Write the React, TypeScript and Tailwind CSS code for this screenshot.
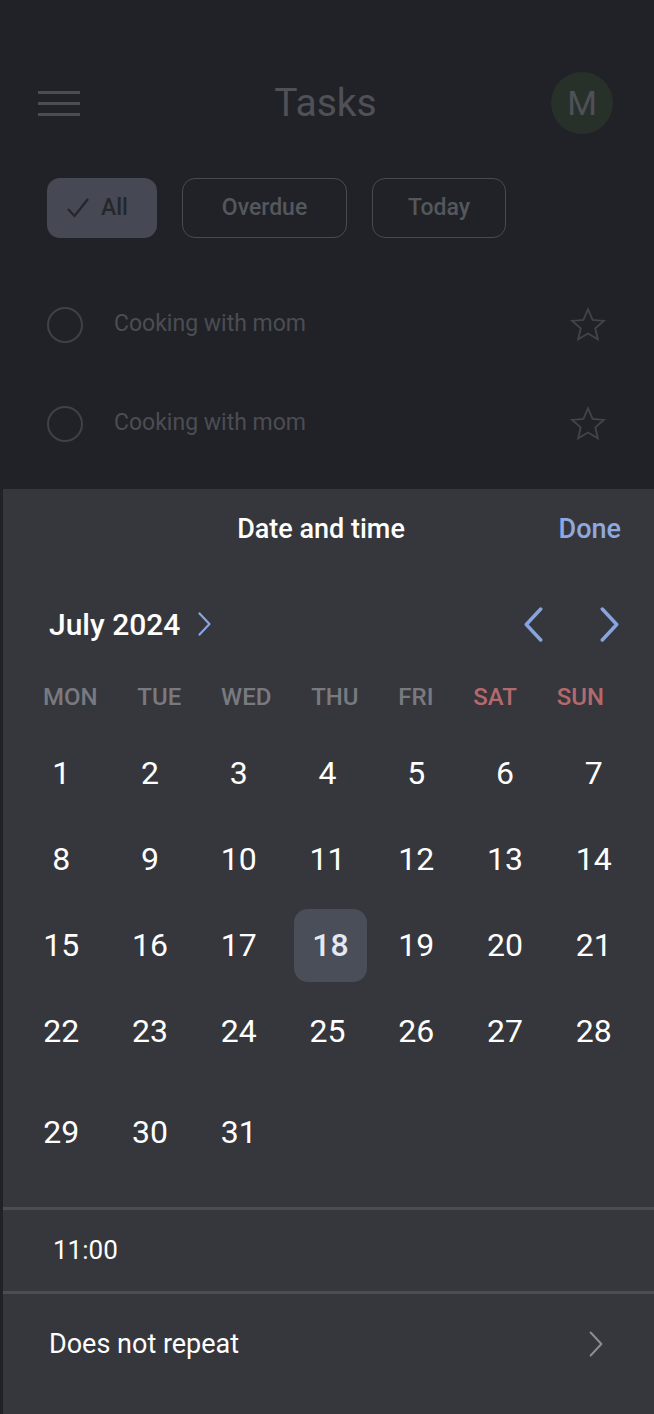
import React from "react";

const days: (number | null)[][] = [
  [1, 2, 3, 4, 5, 6, 7],
  [8, 9, 10, 11, 12, 13, 14],
  [15, 16, 17, 18, 19, 20, 21],
  [22, 23, 24, 25, 26, 27, 28],
  [29, 30, 31, null, null, null, null],
];

const weekdays = ["MON", "TUE", "WED", "THU", "FRI", "SAT", "SUN"];

function Chevron({ dir, className, sw }: { dir: "l" | "r"; className: string; sw: number }) {
  return (
    <svg viewBox="0 0 20 34" className={className} fill="none" stroke="currentColor" strokeWidth={sw} strokeLinecap="round" strokeLinejoin="round">
      {dir === "r" ? <path d="M3 2 L17 17 L3 32" /> : <path d="M17 2 L3 17 L17 32" />}
    </svg>
  );
}

function Star() {
  return (
    <svg viewBox="0 0 24 24" className="w-[38px] h-[38px] text-[#424349]" fill="none" stroke="currentColor" strokeWidth={1.2} strokeLinejoin="miter">
      <path d="M12 2.2l2.9 6.6 7.1.6-5.4 4.7 1.6 7L12 17.4l-6.2 3.7 1.6-7L2 9.4l7.1-.6L12 2.2z" />
    </svg>
  );
}

function TaskRow() {
  return (
    <div className="h-[99px] flex items-center pl-[47px] pr-[47px]">
      <div className="w-[36px] h-[36px] rounded-full border-[2.5px] border-[#404147]" />
      <div className="ml-[31px] flex-1 text-[23px] text-[#4b4d53]">Cooking with mom</div>
      <Star />
    </div>
  );
}

export default function App() {
  return (
    <div className="w-[654px] h-[1414px] bg-[#212227] font-['Roboto',sans-serif] overflow-hidden">
      <div className="h-[489px] flex flex-col">
        <div className="pt-[72px] grid grid-cols-[1fr_auto_1fr] items-center pl-[38px] pr-[41px] h-[134px]">
          <div className="flex flex-col gap-[8px] w-[42px]">
            <div className="h-[3px] bg-[#4b4d53]" />
            <div className="h-[3px] bg-[#4b4d53]" />
            <div className="h-[3px] bg-[#4b4d53]" />
          </div>
          <div className="text-[39px] text-[#4f5157] leading-none">Tasks</div>
          <div className="justify-self-end w-[62px] h-[62px] rounded-full bg-[#28302a] flex items-center justify-center text-[34px] text-[#4f5158]">
            M
          </div>
        </div>
        <div className="mt-[44px] flex pl-[47px] gap-[25px] h-[60px]">
          <div className="w-[110px] h-full rounded-[13px] bg-[#464954] flex items-center pl-[19px] gap-[11px] text-[23px] font-medium text-[#25272c]">
            <svg viewBox="0 0 24 24" className="w-[24px] h-[24px]" fill="none" stroke="currentColor" strokeWidth={2.4}>
              <path d="M2 13 L8.5 20 L22 3" />
            </svg>
            <span>All</span>
          </div>
          <div className="w-[165px] h-full rounded-[13px] border-[1.5px] border-[#4a4b51] flex items-center justify-center text-[23px] font-medium text-[#55575e]">
            Overdue
          </div>
          <div className="w-[134px] h-full rounded-[13px] border-[1.5px] border-[#4a4b51] flex items-center justify-center text-[23px] font-medium text-[#55575e]">
            Today
          </div>
        </div>
        <div className="mt-[37px]">
          <TaskRow />
          <TaskRow />
        </div>
      </div>

      <div className="ml-[3px] h-[925px] bg-[#36373c] flex flex-col">
        <div className="h-[80px] grid grid-cols-[1fr_auto_1fr] items-center pl-[18px] pr-[33px]">
          <div />
          <div className="text-[27px] font-medium text-white">Date and time</div>
          <div className="justify-self-end text-[27px] font-medium text-[#8ea9e0]">Done</div>
        </div>

        <div className="mt-[27px] h-[56px] flex items-center pl-[46px] pr-[34px]">
          <div className="text-[30px] font-medium text-white">July 2024</div>
          <Chevron dir="r" sw={3.2} className="ml-[17px] w-[15px] h-[24px] text-[#86a4e0]" />
          <div className="flex-1" />
          <Chevron dir="l" sw={3.4} className="w-[21px] h-[35px] text-[#86a4e0]" />
          <Chevron dir="r" sw={3.4} className="ml-[55px] w-[21px] h-[35px] text-[#86a4e0]" />
        </div>

        <div className="mt-[12px] h-[66px] flex items-center justify-between pl-[40px] pr-[50px]">
          {weekdays.map((w, i) => (
            <div
              key={w}
              className={`text-[24px] font-medium ${i >= 5 ? "text-[#b4696c]" : "text-[#797a80]"}`}
            >
              {w}
            </div>
          ))}
        </div>

        <div className="pl-[14px] pr-[16px]">
          {days.map((row, ri) => (
            <div key={ri} className={`grid grid-cols-7 items-center ${ri === 4 ? "h-[116px]" : "h-[86px]"}`}>
              {row.map((d, ci) => (
                <div key={ci} className="flex items-center justify-center">
                  {d === 18 ? (
                    <div className="ml-[6px] w-[73px] h-[73px] rounded-[14px] bg-[#4a4e59] flex items-center justify-center text-[32px] font-medium text-[#e3e8f2]">
                      {d}
                    </div>
                  ) : d !== null ? (
                    <span className="text-[32px] text-white">{d}</span>
                  ) : null}
                </div>
              ))}
            </div>
          ))}
        </div>

        <div className="mt-[17px] h-[3px] bg-[#4c4d53]" />
        <div className="h-[81px] flex items-center pl-[50px] text-[26px] text-white">11:00</div>
        <div className="h-[3px] bg-[#4c4d53]" />
        <div className="h-[100px] flex items-center pl-[46px] pr-[50px]">
          <div className="flex-1 text-[27px] text-white">Does not repeat</div>
          <Chevron dir="r" sw={2.6} className="w-[16px] h-[26px] text-[#8c8d92]" />
        </div>
      </div>
    </div>
  );
}
